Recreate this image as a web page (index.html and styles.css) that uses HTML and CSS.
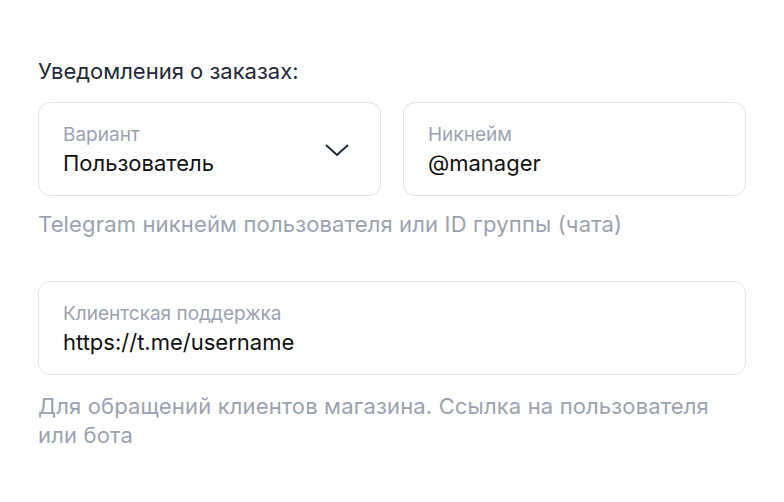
FILE: index.html
```html
<!DOCTYPE html>
<html lang="ru">

<head>
    <meta charset="UTF-8">
    <title>Уведомления</title>
    <link rel="stylesheet" href="styles.css">
</head>

<body>
    <section class="form">
        <h3 class="titel">Уведомления о заказах:</h3>

        <div class="row">
            <label class="field select">
                <span class="label">Вариант</span>
                <span class="value">Пользователь</span>
                <svg class="chevron" width="26" height="14" viewBox="0 0 26 14">
                    <path d="M2 2 L13 12 L24 2" fill="none" stroke="#1f2937" stroke-width="2" />
                </svg>
            </label>
            <label class="field">
                <span class="label">Никнейм</span>
                <span class="value">@manager</span>
            </label>
        </div>
        <p class="hint">Telegram никнейм пользователя или ID группы (чата)</p>

        <label class="field wide">
            <span class="label">Клиентская поддержка</span>
            <span class="value">https://t.me/username</span>
        </label>
        <p class="hint last">Для обращений клиентов магазина. Ссылка на пользователя или бота</p>
    </section>
</body>

</html>
```

FILE: styles.css
```css
body {
    margin: 0;
    background-color: white;
    font-family: Inter, "Noto Sans", sans-serif;
}

.form {
    width: 708px;
    padding: 56px 0 0 38px;
}

.titel {
    margin: 0 0 16px 0;
    font-size: 22px;
    font-weight: 400;
    line-height: 30px;
    color: #1f2937;
}

.row {
    display: grid;
    grid-template-columns: 1fr 1fr;
    gap: 22px;
}

.field {
    display: flex;
    flex-direction: column;
    height: 94px;
    box-sizing: border-box;
    padding: 20px 24px 0 24px;
    border: 1px solid #e3e4e8;
    border-radius: 12px;
    position: relative;
}

.label {
    font-size: 19px;
    line-height: 24px;
    color: #9ca3af;
}

.value {
    font-size: 22px;
    line-height: 33px;
    color: #111111;
}

.chevron {
    position: absolute;
    right: 30px;
    top: 40px;
}

.hint {
    margin: 14px 0 0 0;
    font-size: 22px;
    line-height: 29px;
    letter-spacing: 0.15px;
    color: #9ca3af;
}

.wide {
    margin-top: 42px;
}

.last {
    margin-top: 17px;
}
```
